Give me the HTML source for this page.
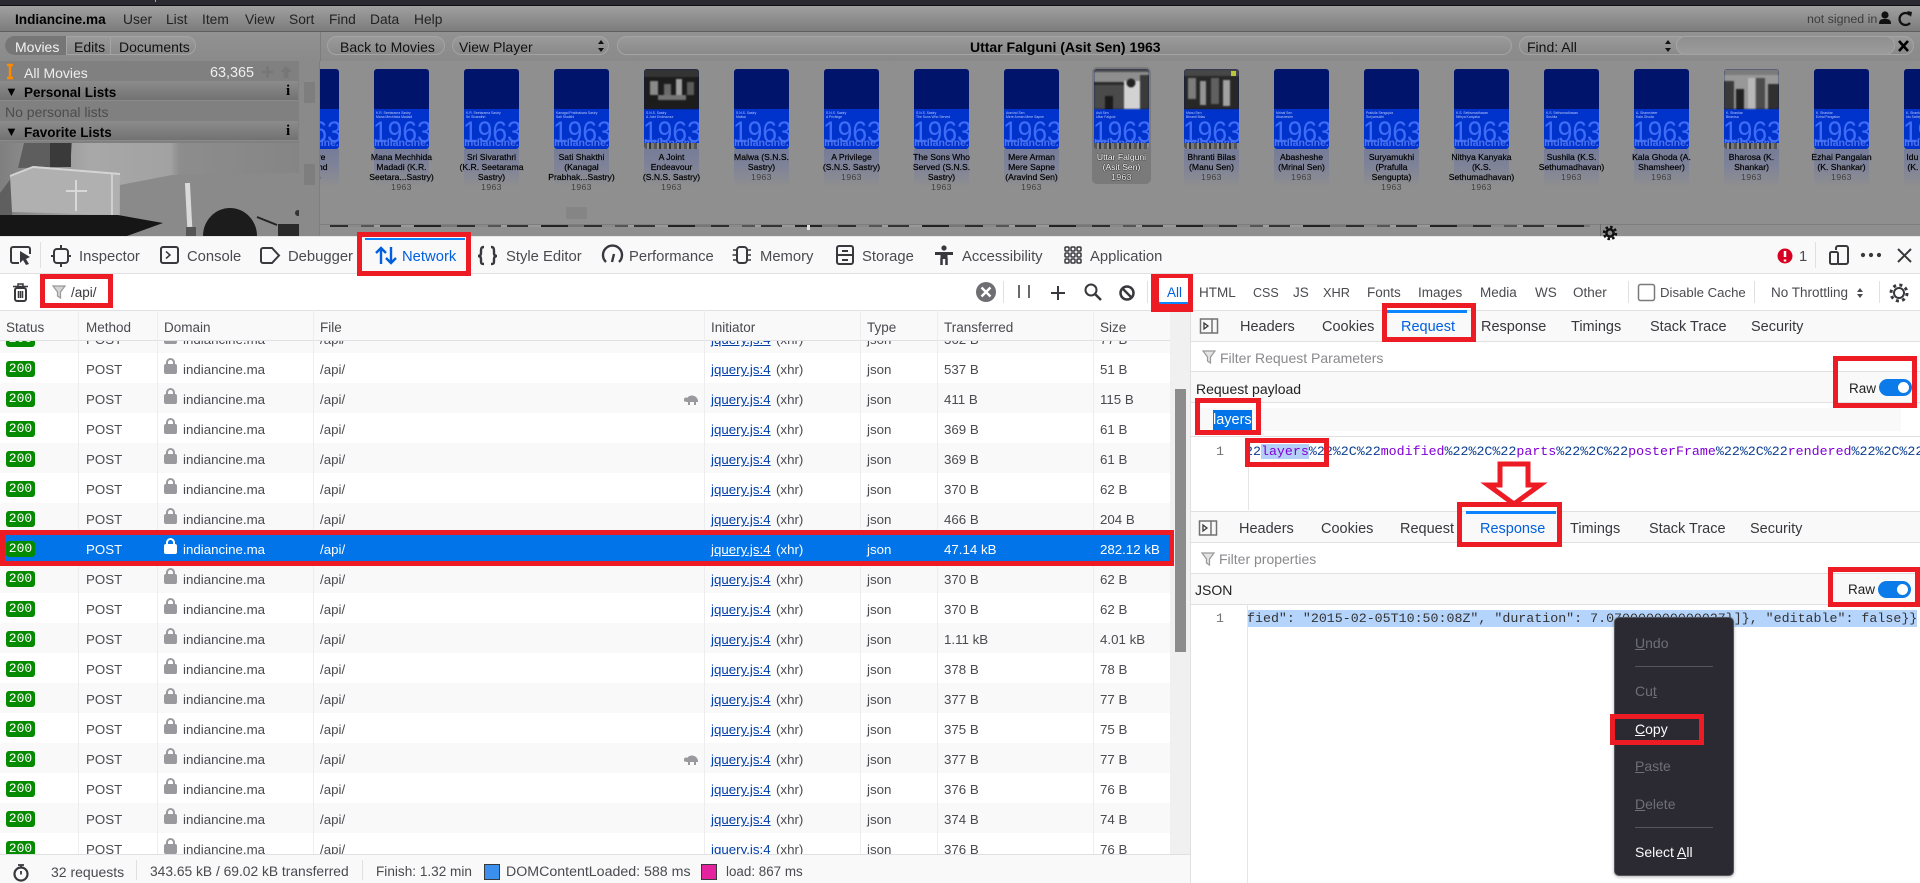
<!DOCTYPE html>
<html lang="en"><head><meta charset="utf-8"><title>Indiancine.ma</title>
<style>
html,body{margin:0;padding:0;background:#fff}
body{width:1920px;height:883px;overflow:hidden;position:relative;font-family:"Liberation Sans",sans-serif}
.t{position:absolute;white-space:nowrap;line-height:20px;font-size:14px;color:#111}
.b{position:absolute;box-sizing:border-box}
.pill{position:absolute;box-sizing:border-box;height:19px;top:36px;border-radius:10px;background:linear-gradient(#9b9b9b,#8a8a8a);border:1px solid #a4a4a4}
.tb{font-size:14.8px;color:#4a4a4f}
.f2{font-size:13.5px;color:#4a4a4f}
.pt{font-size:14.5px;color:#38383d}
.ph{font-size:14px;color:#8a8a8e}
.blue{color:#0060df}
.x{position:absolute;border:5px solid #ed1c24;box-sizing:border-box}
.sec{position:absolute;left:0;width:298px;height:20px;background:linear-gradient(#8c8c8c,#727272);border-bottom:1px solid #8a8a8a;box-sizing:border-box}
#strip{position:absolute;left:320px;top:61px;width:1600px;height:164px;overflow:hidden}
.c{position:absolute;top:8px;width:55px;height:118px}
.p{position:absolute;left:0;top:0;width:55px;height:80px;border-radius:3px;overflow:hidden;background:linear-gradient(#00146b 0,#00146b 40px,#0033cc 40px,#0033cc 100%)}
.p b{position:absolute;left:-1px;top:49px;font-weight:normal;font-size:30px;line-height:30px;color:#3f6cf6;white-space:nowrap;transform:scaleX(.88);transform-origin:0 0}
.p u{position:absolute;left:0;top:68px;text-decoration:none;font-size:10.5px;line-height:12px;font-weight:bold;color:#4c72ee;white-space:nowrap}
.p s{position:absolute;left:2px;text-decoration:none;font-size:3.4px;line-height:4px;color:#b8c8f8;white-space:nowrap}
.p svg{position:absolute;left:0;top:0;filter:blur(.7px)}
.q{position:absolute;left:0;top:74px;width:55px;height:6px;background:repeating-linear-gradient(90deg,#555 0 3px,#8a8a8a 3px 5px,#333 5px 7px,#777 7px 10px)}
.rf{position:absolute;left:0;top:80px;width:55px;height:38px;background:linear-gradient(#767c98,#7f8398 45%,#8f8f8f)}
.n{position:absolute;left:-18px;width:91px;top:83px;text-align:center;font-size:8.6px;line-height:10px;color:#000;white-space:nowrap;-webkit-text-stroke:.2px #000}
.n i{font-style:normal;color:#3f3f3f;-webkit-text-stroke:0;letter-spacing:.4px}
.sel .rf{display:none}
.sel .bg{position:absolute;left:-2px;top:-2px;width:59px;height:117px;border-radius:5px;background:#7a7a7a}
.sel .n{color:#fff;-webkit-text-stroke:0;text-shadow:0 0 1px #000,0 0 1px #000}
.sel .n i{color:#eee}
#list{position:absolute;left:0;top:341px;width:1170px;height:513px;overflow:hidden;background:#fff}
.r{position:absolute;left:0;width:1170px;height:30px;line-height:33px;font-size:13.3px;color:#4a4a4f;background:#fff}
.g{background:#f9f9fa}
.r span,.r b,.r u,.r em{position:absolute;white-space:nowrap;font-style:normal;font-weight:normal}
.r b{left:6px;top:8px;width:29px;height:16px;border-radius:3px;background:#058b00;color:#fff;font:13px/16px "Liberation Mono",monospace;text-align:center}
.m{left:86px}.d{left:183px}.f{left:320px}.xh{left:776px}.y{left:867px}.a{left:944px}.z{left:1100px}
.r u{left:711px;color:#003eaa}
.r em{left:164px;top:11px;width:13px;height:10px;background:#9a9a9e;border-radius:2px}
.r em:before{content:"";position:absolute;left:2px;top:-6px;width:5px;height:6px;border:2px solid #9a9a9e;border-bottom:0;border-radius:5px 5px 0 0}
.s{background:#0074e8;color:#fff}
.s u{color:#fff}.s em{background:#fff}.s em:before{border-color:#fff}
.vl{position:absolute;top:310px;width:1px;height:544px;background:#ededf0}
.ln{position:absolute;left:1190px;width:730px;height:1px;background:#e0e0e2}
.mono{font-family:"Liberation Mono",monospace;font-size:13.3px}
.code{position:absolute;left:1247px;width:673px;overflow:hidden;white-space:pre;height:20px;line-height:20px}
.tg{position:absolute;width:33px;height:17px;border-radius:9px;background:#0a7be8}
.tg:after{content:"";position:absolute;right:3px;top:3px;width:11px;height:11px;border-radius:50%;background:#fff}
#menu{position:absolute;left:1614px;top:617px;width:120px;height:259px;background:#2b2a33;border:1px solid #55555c;border-radius:5px;box-sizing:border-box;box-shadow:0 1px 3px rgba(0,0,0,.3)}
.mi{position:absolute;left:1635px;font-size:14px;line-height:20px;color:#6f6f78;white-space:nowrap}
.mw{color:#fbfbfe}
.ms{position:absolute;left:1635px;width:78px;height:1px;background:#55555c}
</style></head><body>

<!-- top app -->
<div class="b" style="left:0;top:0;width:1920px;height:6px;background:#2b2a33;border-bottom:1px solid #111"></div>
<div class="b" style="left:155px;top:0;width:1px;height:2px;background:#aaa"></div>
<div class="b" style="left:0;top:6px;width:1920px;height:26px;background:linear-gradient(#a0a0a0,#7c7c7c);border-bottom:1px solid #5f5f5f"></div>
<div class="b" style="left:0;top:32px;width:1920px;height:29px;background:linear-gradient(#929292,#8a8a8a)"></div>
<div class="b" style="left:0;top:61px;width:1920px;height:175px;background:#8f8f8f"></div>
<div class="t" style="left:15px;top:10px;font-weight:bold;font-size:13.6px;color:#000">Indiancine.ma</div>
<div class="t" style="left:123px;top:10px;color:#222;font-size:13.8px">User</div>
<div class="t" style="left:166px;top:10px;color:#222;font-size:13.8px">List</div>
<div class="t" style="left:202px;top:10px;color:#222;font-size:13.8px">Item</div>
<div class="t" style="left:245px;top:10px;color:#222;font-size:13.8px">View</div>
<div class="t" style="left:289px;top:10px;color:#222;font-size:13.8px">Sort</div>
<div class="t" style="left:329px;top:10px;color:#222;font-size:13.8px">Find</div>
<div class="t" style="left:370px;top:10px;color:#222;font-size:13.8px">Data</div>
<div class="t" style="left:414px;top:10px;color:#222;font-size:13.8px">Help</div>
<div class="t" style="left:1807px;top:9px;color:#3c3c3c;font-size:12.4px">not signed in</div>

<!-- segmented tabs -->
<div class="pill" style="left:5px;width:191px"></div>
<div class="b" style="left:5px;top:36px;width:61px;height:19px;background:#767676;border-radius:10px 0 0 10px"></div>
<div class="b" style="left:110px;top:36px;width:1px;height:19px;background:#a4a4a4"></div>
<div class="b" style="left:66px;top:36px;width:1px;height:19px;background:#a4a4a4"></div>
<div class="t" style="left:15px;top:37px;color:#f2f2f2">Movies</div>
<div class="t" style="left:74px;top:37px;color:#111">Edits</div>
<div class="t" style="left:119px;top:37px;color:#111">Documents</div>
<div class="b" style="left:320px;top:32px;width:1px;height:29px;background:#7d7d7d"></div>
<div class="pill" style="left:327px;width:118px"></div>
<div class="t" style="left:340px;top:37px">Back to Movies</div>
<div class="pill" style="left:452px;width:157px"></div>
<div class="t" style="left:459px;top:37px">View Player</div>
<div class="pill" style="left:617px;width:895px"></div>
<div class="t" style="left:970px;top:37px;font-weight:bold;color:#000">Uttar Falguni (Asit Sen) 1963</div>
<div class="pill" style="left:1519px;width:170px"></div>
<div class="t" style="left:1527px;top:37px">Find: All</div>
<div class="pill" style="left:1676px;width:238px"></div>
<div class="pill" style="left:1676px;width:219px;background:linear-gradient(#8f8f8f,#9b9b9b)"></div>

<!-- left list -->
<div class="b" style="left:0;top:61px;width:299px;height:82px;background:#808080"></div>
<div class="b" style="left:299px;top:61px;width:21px;height:175px;background:#8a8a8a;border-right:1px solid #7f7f7f"></div>
<div class="b" style="left:304px;top:82px;width:11px;height:21px;background:#7e7e7e"></div>
<div class="b" style="left:304px;top:164px;width:11px;height:21px;background:#7e7e7e"></div>
<div class="t" style="left:24px;top:63px;color:#eee">All Movies</div>
<div class="t" style="left:210px;top:63px;color:#eee;font-size:14.4px">63,365</div>
<div class="sec" style="top:81px"></div>
<div class="t" style="left:5px;top:82px;font-size:13px;color:#000">▼</div>
<div class="t" style="left:24px;top:83px;font-weight:bold;font-size:13.5px;color:#000">Personal Lists</div>
<div class="t" style="left:286px;top:81px;font:bold 15px/20px 'Liberation Serif',serif;color:#000">i</div>
<div class="t" style="left:5px;top:102px;color:#4c4c4c">No personal lists</div>
<div class="sec" style="top:121px"></div>
<div class="t" style="left:5px;top:122px;font-size:13px;color:#000">▼</div>
<div class="t" style="left:24px;top:123px;font-weight:bold;font-size:13.5px;color:#000">Favorite Lists</div>
<div class="t" style="left:286px;top:121px;font:bold 15px/20px 'Liberation Serif',serif;color:#000">i</div>

<!-- sidebar photo -->
<svg class="b" style="left:0;top:143px" width="299" height="93" viewBox="0 0 299 93">
<defs><linearGradient id="w" x1="0" x2="1" y1="0" y2="0"><stop offset="0" stop-color="#7f7f7f"/><stop offset=".3" stop-color="#a8a8a8"/><stop offset=".57" stop-color="#a2a2a2"/><stop offset=".6" stop-color="#8d8d8d"/><stop offset="1" stop-color="#858585"/></linearGradient></defs>
<rect width="299" height="93" fill="url(#w)"/>
<polygon points="120,42 172,32 299,30 299,93 120,93" fill="#8a8a8a"/>
<polygon points="0,50 12,34 12,72 0,75" fill="#5f5f5f"/>
<polygon points="18,25 24,0 72,0 70,24" fill="#5e5e5e"/>
<rect x="50" y="0" width="21" height="24" fill="#3a3a3a"/>
<polygon points="10,32 33,23 120,30 119,72 12,69" fill="#b0b0b0"/>
<polygon points="10,32 33,23 120,30 120,32 33,25 10,34" fill="#d4d4d4"/>
<path d="M76 37v31M66 48h21" stroke="#d8d8d8" stroke-width="2"/>
<path d="M112 31v41" stroke="#cfcfcf" stroke-width="2"/>
<polygon points="0,72 118,72 163,80 127,93 0,93" fill="#161616"/>
<rect x="186" y="40" width="5" height="44" fill="#dadada" transform="rotate(-3 188 60)"/>
<rect x="186" y="84" width="10" height="9" fill="#555"/>
<ellipse cx="230" cy="93" rx="27" ry="28" fill="#1c1c1c"/>
<path d="M257 74l20 8" stroke="#222" stroke-width="2" fill="none"/>
<rect x="278" y="81" width="21" height="12" fill="#2a2a2a"/>
<circle cx="298" cy="70" r="3" fill="#333"/>
</svg>

<!-- strip of movies -->
<div id="strip"><div style="position:absolute;left:-320px;top:0;width:1920px;height:164px">
<div class="c" style="left:284px"><div class="rf"></div><div class="p"><s style="top:42px">Aravind Sen</s><s style="top:46px">Adhure</s><b>1963</b><u>Indiancine.ma</u></div><div class="n">Adhure<br>(Aravind<br>Sen)</div></div>
<div class="c" style="left:374px"><div class="rf"></div><div class="p"><s style="top:42px">K.R. Seetarama Sastry</s><s style="top:46px">Mana Mechhida Madadi</s><b>1963</b><u>Indiancine.ma</u></div><div class="n">Mana Mechhida<br>Madadi (K.R.<br>Seetara...Sastry)<br><i>1963</i></div></div>
<div class="c" style="left:464px"><div class="rf"></div><div class="p"><s style="top:42px">K.R. Seetarama Sastry</s><s style="top:46px">Sri Sivarathri</s><b>1963</b><u>Indiancine.ma</u></div><div class="n">Sri Sivarathri<br>(K.R. Seetarama<br>Sastry)<br><i>1963</i></div></div>
<div class="c" style="left:554px"><div class="rf"></div><div class="p"><s style="top:42px">Kanagal Prabhakara Sastry</s><s style="top:46px">Sati Shakthi</s><b>1963</b><u>Indiancine.ma</u></div><div class="n">Sati Shakthi<br>(Kanagal<br>Prabhak...Sastry)<br><i>1963</i></div></div>
<div class="c" style="left:644px"><div class="rf"></div><div class="p"><svg width="55" height="40"><rect width="55" height="40" fill="#1c1c1c"/><rect y="0" width="55" height="8" fill="#343434"/><rect x="6" y="12" width="8" height="14" fill="#8a8a8a"/><rect x="20" y="15" width="7" height="11" fill="#6a6a6a"/><rect x="32" y="10" width="6" height="16" fill="#a0a0a0"/><rect x="43" y="13" width="7" height="13" fill="#5c5c5c"/><rect x="14" y="26" width="28" height="5" fill="#747474"/></svg><s style="top:42px">S.N.S. Sastry</s><s style="top:46px">A Joint Endeavour</s><b>1963</b><u>Indiancine.ma</u><div class="q"></div></div><div class="n">A Joint<br>Endeavour<br>(S.N.S. Sastry)<br><i>1963</i></div></div>
<div class="c" style="left:734px"><div class="rf"></div><div class="p"><s style="top:42px">S.N.S. Sastry</s><s style="top:46px">Malwa</s><b>1963</b><u>Indiancine.ma</u></div><div class="n">Malwa (S.N.S.<br>Sastry)<br><i>1963</i></div></div>
<div class="c" style="left:824px"><div class="rf"></div><div class="p"><s style="top:42px">S.N.S. Sastry</s><s style="top:46px">A Privilege</s><b>1963</b><u>Indiancine.ma</u></div><div class="n">A Privilege<br>(S.N.S. Sastry)<br><i>1963</i></div></div>
<div class="c" style="left:914px"><div class="rf"></div><div class="p"><s style="top:42px">S.N.S. Sastry</s><s style="top:46px">The Sons Who Served</s><b>1963</b><u>Indiancine.ma</u></div><div class="n">The Sons Who<br>Served (S.N.S.<br>Sastry)<br><i>1963</i></div></div>
<div class="c" style="left:1004px"><div class="rf"></div><div class="p"><s style="top:42px">Aravind Sen</s><s style="top:46px">Mere Arman Mere Sapne</s><b>1963</b><u>Indiancine.ma</u></div><div class="n">Mere Arman<br>Mere Sapne<br>(Aravind Sen)<br><i>1963</i></div></div>
<div class="c sel" style="left:1094px"><div class="bg"></div><div class="p"><svg width="55" height="40"><rect width="55" height="40" fill="#8e8e8e"/><rect y="0" width="55" height="3" fill="#4a4a4a"/><rect x="0" y="13" width="32" height="3" fill="#2a2a2a"/><rect x="0" y="16" width="30" height="24" fill="#4a4a4a"/><rect x="11" y="27" width="8" height="13" fill="#1a1a1a"/><rect x="30" y="12" width="16" height="28" fill="#d2d2d2"/><circle cx="37" cy="14" r="4.500" fill="#222"/><rect x="46" y="6" width="9" height="34" fill="#3a3a3a"/></svg><s style="top:42px">Asit Sen</s><s style="top:46px">Uttar Falguni</s><b>1963</b><u>Indiancine.ma</u><div class="q"></div></div><div class="n">Uttar Falguni<br>(Asit Sen)<br><i>1963</i></div></div>
<div class="c" style="left:1184px"><div class="rf"></div><div class="p"><svg width="55" height="40"><rect width="55" height="40" fill="#272727"/><rect x="0" y="0" width="55" height="7" fill="#474747"/><rect x="4" y="9" width="8" height="21" fill="#7c7c7c"/><rect x="16" y="12" width="6" height="24" fill="#949494"/><rect x="27" y="9" width="8" height="26" fill="#606060"/><rect x="39" y="11" width="7" height="26" fill="#a2a2a2"/></svg><svg width="55" height="40" style="filter:none"><rect x="47" y="2" width="5" height="5" fill="#b7c63a"/></svg><s style="top:42px">Manu Sen</s><s style="top:46px">Bhranti Bilas</s><b>1963</b><u>Indiancine.ma</u><div class="q"></div></div><div class="n">Bhranti Bilas<br>(Manu Sen)<br><i>1963</i></div></div>
<div class="c" style="left:1274px"><div class="rf"></div><div class="p"><s style="top:42px">Mrinal Sen</s><s style="top:46px">Abasheshe</s><b>1963</b><u>Indiancine.ma</u></div><div class="n">Abasheshe<br>(Mrinal Sen)<br><i>1963</i></div></div>
<div class="c" style="left:1364px"><div class="rf"></div><div class="p"><s style="top:42px">Prafulla Sengupta</s><s style="top:46px">Suryamukhi</s><b>1963</b><u>Indiancine.ma</u></div><div class="n">Suryamukhi<br>(Prafulla<br>Sengupta)<br><i>1963</i></div></div>
<div class="c" style="left:1454px"><div class="rf"></div><div class="p"><s style="top:42px">K.S. Sethumadhavan</s><s style="top:46px">Nithya Kanyaka</s><b>1963</b><u>Indiancine.ma</u></div><div class="n">Nithya Kanyaka<br>(K.S.<br>Sethumadhavan)<br><i>1963</i></div></div>
<div class="c" style="left:1544px"><div class="rf"></div><div class="p"><s style="top:42px">K.S. Sethumadhavan</s><s style="top:46px">Sushila</s><b>1963</b><u>Indiancine.ma</u></div><div class="n">Sushila (K.S.<br>Sethumadhavan)<br><i>1963</i></div></div>
<div class="c" style="left:1634px"><div class="rf"></div><div class="p"><s style="top:42px">A. Shamsheer</s><s style="top:46px">Kala Ghoda</s><b>1963</b><u>Indiancine.ma</u></div><div class="n">Kala Ghoda (A.<br>Shamsheer)<br><i>1963</i></div></div>
<div class="c" style="left:1724px"><div class="rf"></div><div class="p"><svg width="55" height="40"><rect width="55" height="40" fill="#989898"/><rect x="0" y="0" width="55" height="6" fill="#7c7c7c"/><rect x="0" y="12" width="10" height="28" fill="#3a3a3a"/><rect x="12" y="20" width="8" height="20" fill="#222"/><rect x="24" y="9" width="7" height="31" fill="#b8b8b8"/><rect x="32" y="9" width="9" height="31" fill="#4c4c4c"/><rect x="44" y="15" width="11" height="25" fill="#303030"/></svg><s style="top:42px">K. Shankar</s><s style="top:46px">Bharosa</s><b>1963</b><u>Indiancine.ma</u><div class="q"></div></div><div class="n">Bharosa (K.<br>Shankar)<br><i>1963</i></div></div>
<div class="c" style="left:1814px"><div class="rf"></div><div class="p"><s style="top:42px">K. Shankar</s><s style="top:46px">Ezhai Pangalan</s><b>1963</b><u>Indiancine.ma</u></div><div class="n">Ezhai Pangalan<br>(K. Shankar)<br><i>1963</i></div></div>
<div class="c" style="left:1904px"><div class="rf"></div><div class="p"><s style="top:42px">K. Shankar</s><s style="top:46px">Idu Sathiyam</s><b>1963</b><u>Indiancine.ma</u></div><div class="n">Idu Sathiyam<br>(K. Shankar)<br><i>1963</i></div></div>
</div></div>
<div class="b" style="left:566px;top:207px;width:21px;height:12px;background:#858585"></div>
<div class="b" style="left:320px;top:224px;width:1600px;height:1px;background:#7d7d7d"></div>
<div class="b" style="left:330px;top:225px;width:1260px;height:2px;background:repeating-linear-gradient(90deg,#2d2d2d 0 18px,#8a8a8a 18px 31px,#555 31px 44px,#9c9c9c 44px 50px,#333 50px 71px,#999 71px 84px,#222 84px 111px,#777 111px 127px)"></div>
<div class="b" style="left:807px;top:225px;width:3px;height:5px;background:#ddd"></div>
<div class="b" style="left:1600px;top:224px;width:1px;height:12px;background:#6f6f6f"></div>

<!-- devtools toolbar -->
<div class="b" style="left:0;top:236px;width:1920px;height:38px;background:#f9f9fa;border-bottom:1px solid #e0e0e2;border-top:1px solid #e6e6e6"></div>
<div class="b" style="left:0;top:274px;width:1920px;height:36px;background:#fff"></div>
<div class="b" style="left:365px;top:238px;width:100px;height:2px;background:#0a84ff"></div>
<div class="t tb" style="left:79px;top:247px">Inspector</div>
<div class="t tb" style="left:187px;top:247px">Console</div>
<div class="t tb" style="left:288px;top:247px">Debugger</div>
<div class="t tb blue" style="left:402px;top:247px">Network</div>
<div class="t tb" style="left:506px;top:247px">Style Editor</div>
<div class="t tb" style="left:629px;top:247px">Performance</div>
<div class="t tb" style="left:760px;top:247px">Memory</div>
<div class="t tb" style="left:862px;top:247px">Storage</div>
<div class="t tb" style="left:962px;top:247px">Accessibility</div>
<div class="t tb" style="left:1090px;top:247px">Application</div>
<div class="t tb" style="left:1799px;top:247px">1</div>
<div class="t" style="left:71px;top:283px;font-size:13.5px;color:#38383d">/api/</div>
<div class="t f2 blue" style="left:1167px;top:283px">All</div>
<div class="b" style="left:1159px;top:302px;width:29px;height:2px;background:#0a84ff"></div>
<div class="t f2" style="left:1199px;top:283px">HTML</div>
<div class="t f2" style="left:1253px;top:283px;font-size:12.5px">CSS</div>
<div class="t f2" style="left:1293px;top:283px">JS</div>
<div class="t f2" style="left:1323px;top:283px;font-size:12.8px">XHR</div>
<div class="t f2" style="left:1367px;top:283px">Fonts</div>
<div class="t f2" style="left:1418px;top:283px">Images</div>
<div class="t f2" style="left:1480px;top:283px">Media</div>
<div class="t f2" style="left:1535px;top:283px">WS</div>
<div class="t f2" style="left:1573px;top:283px">Other</div>
<div class="t f2" style="left:1660px;top:283px;font-size:13.2px">Disable Cache</div>
<div class="t f2" style="left:1771px;top:283px">No Throttling</div>

<!-- table header -->
<div class="b" style="left:0;top:310px;width:1190px;height:31px;background:#f9f9fa;border-top:1px solid #e0e0e2;border-bottom:1px solid #e0e0e2"></div>
<div class="t f2" style="left:6px;top:318px">Status</div>
<div class="t f2" style="left:86px;top:318px">Method</div>
<div class="t f2" style="left:164px;top:318px">Domain</div>
<div class="t f2" style="left:320px;top:318px">File</div>
<div class="t f2" style="left:711px;top:318px">Initiator</div>
<div class="t f2" style="left:867px;top:318px">Type</div>
<div class="t f2" style="left:944px;top:318px">Transferred</div>
<div class="t f2" style="left:1100px;top:318px">Size</div>

<!-- rows -->
<div id="list">
<div class="r g" style="top:-18px"><b>200</b><span class="m">POST</span><em></em><span class="d">indiancine.ma</span><span class="f">/api/</span><u>jquery.js:4</u><span class="xh">(xhr)</span><span class="y">json</span><span class="a">362 B</span><span class="z">77 B</span></div>
<div class="r" style="top:12px"><b>200</b><span class="m">POST</span><em></em><span class="d">indiancine.ma</span><span class="f">/api/</span><u>jquery.js:4</u><span class="xh">(xhr)</span><span class="y">json</span><span class="a">537 B</span><span class="z">51 B</span></div>
<div class="r g" style="top:42px"><b>200</b><span class="m">POST</span><em></em><span class="d">indiancine.ma</span><span class="f">/api/</span><u>jquery.js:4</u><span class="xh">(xhr)</span><span class="y">json</span><span class="a">411 B</span><span class="z">115 B</span></div>
<div class="r" style="top:72px"><b>200</b><span class="m">POST</span><em></em><span class="d">indiancine.ma</span><span class="f">/api/</span><u>jquery.js:4</u><span class="xh">(xhr)</span><span class="y">json</span><span class="a">369 B</span><span class="z">61 B</span></div>
<div class="r g" style="top:102px"><b>200</b><span class="m">POST</span><em></em><span class="d">indiancine.ma</span><span class="f">/api/</span><u>jquery.js:4</u><span class="xh">(xhr)</span><span class="y">json</span><span class="a">369 B</span><span class="z">61 B</span></div>
<div class="r" style="top:132px"><b>200</b><span class="m">POST</span><em></em><span class="d">indiancine.ma</span><span class="f">/api/</span><u>jquery.js:4</u><span class="xh">(xhr)</span><span class="y">json</span><span class="a">370 B</span><span class="z">62 B</span></div>
<div class="r g" style="top:162px"><b>200</b><span class="m">POST</span><em></em><span class="d">indiancine.ma</span><span class="f">/api/</span><u>jquery.js:4</u><span class="xh">(xhr)</span><span class="y">json</span><span class="a">466 B</span><span class="z">204 B</span></div>
<div class="r" style="top:192px"><b>200</b><span class="m">POST</span><em></em><span class="d">indiancine.ma</span><span class="f">/api/</span><u>jquery.js:4</u><span class="xh">(xhr)</span><span class="y">json</span><span class="a">47.14 kB</span><span class="z">282.12 kB</span></div>
<div class="r g" style="top:222px"><b>200</b><span class="m">POST</span><em></em><span class="d">indiancine.ma</span><span class="f">/api/</span><u>jquery.js:4</u><span class="xh">(xhr)</span><span class="y">json</span><span class="a">370 B</span><span class="z">62 B</span></div>
<div class="r" style="top:252px"><b>200</b><span class="m">POST</span><em></em><span class="d">indiancine.ma</span><span class="f">/api/</span><u>jquery.js:4</u><span class="xh">(xhr)</span><span class="y">json</span><span class="a">370 B</span><span class="z">62 B</span></div>
<div class="r g" style="top:282px"><b>200</b><span class="m">POST</span><em></em><span class="d">indiancine.ma</span><span class="f">/api/</span><u>jquery.js:4</u><span class="xh">(xhr)</span><span class="y">json</span><span class="a">1.11 kB</span><span class="z">4.01 kB</span></div>
<div class="r" style="top:312px"><b>200</b><span class="m">POST</span><em></em><span class="d">indiancine.ma</span><span class="f">/api/</span><u>jquery.js:4</u><span class="xh">(xhr)</span><span class="y">json</span><span class="a">378 B</span><span class="z">78 B</span></div>
<div class="r g" style="top:342px"><b>200</b><span class="m">POST</span><em></em><span class="d">indiancine.ma</span><span class="f">/api/</span><u>jquery.js:4</u><span class="xh">(xhr)</span><span class="y">json</span><span class="a">377 B</span><span class="z">77 B</span></div>
<div class="r" style="top:372px"><b>200</b><span class="m">POST</span><em></em><span class="d">indiancine.ma</span><span class="f">/api/</span><u>jquery.js:4</u><span class="xh">(xhr)</span><span class="y">json</span><span class="a">375 B</span><span class="z">75 B</span></div>
<div class="r g" style="top:402px"><b>200</b><span class="m">POST</span><em></em><span class="d">indiancine.ma</span><span class="f">/api/</span><u>jquery.js:4</u><span class="xh">(xhr)</span><span class="y">json</span><span class="a">377 B</span><span class="z">77 B</span></div>
<div class="r" style="top:432px"><b>200</b><span class="m">POST</span><em></em><span class="d">indiancine.ma</span><span class="f">/api/</span><u>jquery.js:4</u><span class="xh">(xhr)</span><span class="y">json</span><span class="a">376 B</span><span class="z">76 B</span></div>
<div class="r g" style="top:462px"><b>200</b><span class="m">POST</span><em></em><span class="d">indiancine.ma</span><span class="f">/api/</span><u>jquery.js:4</u><span class="xh">(xhr)</span><span class="y">json</span><span class="a">374 B</span><span class="z">74 B</span></div>
<div class="r" style="top:492px"><b>200</b><span class="m">POST</span><em></em><span class="d">indiancine.ma</span><span class="f">/api/</span><u>jquery.js:4</u><span class="xh">(xhr)</span><span class="y">json</span><span class="a">376 B</span><span class="z">76 B</span></div>
</div>
<div class="vl" style="left:78px"></div><div class="vl" style="left:157px"></div><div class="vl" style="left:313px"></div><div class="vl" style="left:704px"></div><div class="vl" style="left:860px"></div><div class="vl" style="left:937px"></div><div class="vl" style="left:1093px"></div>
<div class="r s" style="top:533px"><b>200</b><span class="m">POST</span><em></em><span class="d">indiancine.ma</span><span class="f">/api/</span><u>jquery.js:4</u><span class="xh">(xhr)</span><span class="y">json</span><span class="a">47.14 kB</span><span class="z">282.12 kB</span></div>

<!-- scrollbar + footer -->
<div class="b" style="left:1170px;top:310px;width:20px;height:544px;background:#f0f0f0"></div>
<div class="b" style="left:1175px;top:389px;width:11px;height:263px;background:#8c8c8c"></div>
<div class="b" style="left:0;top:854px;width:1190px;height:29px;background:#f9f9fa;border-top:1px solid #e0e0e2"></div>
<div class="t" style="left:51px;top:862px;color:#4a4a4f">32 requests</div>
<div class="t" style="left:150px;top:862px;color:#4a4a4f;font-size:13.8px">343.65 kB / 69.02 kB transferred</div>
<div class="t" style="left:376px;top:862px;color:#4a4a4f;font-size:13.6px">Finish: 1.32 min</div>
<div class="t" style="left:506px;top:862px;color:#4a4a4f;font-size:14.2px">DOMContentLoaded: 588 ms</div>
<div class="t" style="left:726px;top:862px;color:#4a4a4f;font-size:13.4px">load: 867 ms</div>
<div class="b" style="left:484px;top:864px;width:16px;height:16px;background:#3b90ed;border:1px solid #38383d"></div>
<div class="b" style="left:701px;top:864px;width:16px;height:16px;background:#e5239f;border:1px solid #38383d"></div>

<!-- right panel -->
<div class="b" style="left:1190px;top:310px;width:730px;height:573px;background:#fff;border-left:1px solid #e0e0e2"></div>
<div class="b" style="left:1191px;top:311px;width:729px;height:30px;background:#f9f9fa"></div>
<div class="b" style="left:1191px;top:372px;width:729px;height:30px;background:#f9f9fa"></div>
<div class="b" style="left:1200px;top:408px;width:701px;height:23px;background:#f9f9fa"></div>
<div class="b" style="left:1191px;top:512px;width:729px;height:30px;background:#f9f9fa"></div>
<div class="b" style="left:1191px;top:574px;width:729px;height:30px;background:#f9f9fa"></div>
<div class="ln" style="top:310px"></div><div class="ln" style="top:341px"></div><div class="ln" style="top:371px"></div><div class="ln" style="top:402px"></div><div class="ln" style="top:436px"></div>
<div class="ln" style="top:511px"></div><div class="ln" style="top:542px"></div><div class="ln" style="top:573px"></div><div class="ln" style="top:604px"></div>

<div class="t pt" style="left:1240px;top:317px">Headers</div>
<div class="t pt" style="left:1322px;top:317px">Cookies</div>
<div class="t pt blue" style="left:1401px;top:317px">Request</div>
<div class="t pt" style="left:1481px;top:317px">Response</div>
<div class="t pt" style="left:1571px;top:317px">Timings</div>
<div class="t pt" style="left:1650px;top:317px">Stack Trace</div>
<div class="t pt" style="left:1751px;top:317px">Security</div>
<div class="b" style="left:1387px;top:310px;width:80px;height:3px;background:#0a84ff"></div>
<div class="t ph" style="left:1220px;top:348px">Filter Request Parameters</div>
<div class="t" style="left:1196px;top:379px;color:#222;font-size:14px">Request payload</div>
<div class="t" style="left:1849px;top:379px;color:#222;font-size:13.5px">Raw</div>
<div class="tg" style="left:1879px;top:379px"></div>
<div class="t" style="left:1213px;top:410px;background:#0074e8;color:#fff;font-size:14.5px;padding-right:0">layers</div>
<div class="t mono" style="left:1216px;top:442px;color:#737373">1</div>
<div class="code mono" style="top:442px;color:#0b3d91"><span style="margin-left:-2px">22</span><span style="background:#b5d0f8;color:#8000d7">layers</span>%22%2C%22<span style="color:#8000d7">modified</span>%22%2C%22<span style="color:#8000d7">parts</span>%22%2C%22<span style="color:#8000d7">posterFrame</span>%22%2C%22<span style="color:#8000d7">rendered</span>%22%2C%22<span style="color:#8000d7">summary</span></div>
<div class="b" style="left:1248px;top:462px;width:1px;height:48px;background:#e5e5e5"></div>

<div class="t pt" style="left:1239px;top:519px">Headers</div>
<div class="t pt" style="left:1321px;top:519px">Cookies</div>
<div class="t pt" style="left:1400px;top:519px">Request</div>
<div class="t pt blue" style="left:1480px;top:519px">Response</div>
<div class="t pt" style="left:1570px;top:519px">Timings</div>
<div class="t pt" style="left:1649px;top:519px">Stack Trace</div>
<div class="t pt" style="left:1750px;top:519px">Security</div>
<div class="b" style="left:1466px;top:511px;width:90px;height:3px;background:#0a84ff"></div>
<div class="t ph" style="left:1219px;top:549px">Filter properties</div>
<div class="t" style="left:1195px;top:580px;color:#222">JSON</div>
<div class="t" style="left:1848px;top:580px;color:#222;font-size:13.5px">Raw</div>
<div class="tg" style="left:1878px;top:581px"></div>
<div class="b" style="left:1247px;top:604px;width:1px;height:279px;background:#e5e5e5"></div>
<div class="t mono" style="left:1216px;top:609px;color:#737373">1</div>
<div class="b" style="left:1248px;top:610px;width:669px;height:17px;background:#b5d4fb"></div>
<div class="code mono" style="top:609px;color:#333;width:673px">fied": "2015-02-05T10:50:08Z", "duration": 7.070000000000027}]}, "editable": false}}</div>

<!-- icon overlay -->
<svg class="b" style="left:0;top:0" width="1920" height="883" viewBox="0 0 1920 883" fill="none" stroke="#38383d" stroke-width="2">
<!-- app icons -->
<path d="M601 40l-3 4h6zM601 52l-3-4h6z" fill="#111" stroke="none"/>
<path d="M1668 40l-3 4h6zM1668 52l-3-4h6z" fill="#111" stroke="none"/>
<path d="M1899 41l9 10M1908 41l-9 10" stroke="#000" stroke-width="2.6"/>
<path d="M7 65h6M10 65v13M7 78h6" stroke="#ff8a00" stroke-width="2.4"/>
<path d="M262 72h11M267.500 66.500v11" stroke="#777" stroke-width="3"/>
<path d="M286 66l6 6h-3.500v6h-5v-6H280z" fill="#777" stroke="none"/>
<circle cx="1885" cy="15" r="3.600" fill="#111" stroke="none"/><path d="M1879 24c0-5 3-5 6-5s6 0 6 5z" fill="#111" stroke="none"/>
<path d="M1910 15a6 6 0 1 0 0 8" stroke="#111" stroke-width="2.200"/><path d="M1907 11l5 1-1 5z" fill="#111" stroke="none"/>
<circle cx="1610" cy="233" r="3.600" stroke="#111" stroke-width="2.500"/><circle cx="1610" cy="233" r="6" stroke="#111" stroke-width="2.500" stroke-dasharray="2.500 2.200"/>
<!-- toolbar -->
<path d="M19 263h-6a2 2 0 0 1-2-2v-12a2 2 0 0 1 2-2h15a2 2 0 0 1 2 2v5"/>
<polygon points="20,251 30,257 26,259 29,264 26,265 23,260 20,263" fill="#38383d" stroke="none"/>
<path d="M40.500 242v26" stroke="#e0e0e2" stroke-width="1"/>
<rect x="54" y="249" width="14" height="14" rx="3"/><path d="M61 245v4M61 263v4M51 256h3M68 256h3"/>
<rect x="161" y="247" width="17" height="16" rx="2"/><path d="M166 251.500l4 3.500-4 3.500" stroke-width="1.500"/>
<path d="M263 248h9l7 7.500-7 7.500h-9a2 2 0 0 1-2-2v-11a2 2 0 0 1 2-2z"/>
<path d="M381 264V248M376 253l5-5 5 5M391 247v16M386 258l5 5 5-5" stroke="#0060df" stroke-width="2.400"/>
<path d="M484 247c-3 0-3 2-3 4v2c0 2-1 3-3 3 2 0 3 1 3 3v2c0 2 0 3 3 3M491 247c3 0 3 2 3 4v2c0 2 1 3 3 3-2 0-3 1-3 3v2c0 2 0 3-3 3" stroke-width="2.400"/>
<path d="M606 262a9.500 9.500 0 1 1 13 0M612 262l2-8" stroke-width="2.400"/>
<rect x="737" y="247" width="10" height="16" rx="3"/><path d="M733 250h4M732.500 255h4M733 260h4M747 250h4M747 255h4M747 260h4" stroke-width="1.500"/>
<rect x="837" y="246" width="16" height="18" rx="2"/><path d="M837 255h16M842 251h6M842 260h6"/>
<circle cx="944" cy="248" r="2.600" fill="#38383d" stroke="none"/><path d="M935 253.500h18" stroke-width="3"/><path d="M944 253v6" stroke-width="7"/><path d="M941.500 258v7M946.500 258v7" stroke-width="2.500"/>
<g stroke-width="1.500"><rect x="1065" y="247" width="4" height="4" rx="1"/><rect x="1071" y="247" width="4" height="4" rx="1"/><rect x="1077" y="247" width="4" height="4" rx="1"/><rect x="1065" y="253" width="4" height="4" rx="1"/><rect x="1071" y="253" width="4" height="4" rx="1"/><rect x="1077" y="253" width="4" height="4" rx="1"/><rect x="1065" y="259" width="4" height="4" rx="1"/><rect x="1071" y="259" width="4" height="4" rx="1"/><rect x="1077" y="259" width="4" height="4" rx="1"/></g>
<circle cx="1785" cy="256" r="7.500" fill="#d70022" stroke="none"/><path d="M1785 251v6M1785 259.500v2" stroke="#fff" stroke-width="2.500"/>
<path d="M1815.500 242v26" stroke="#e0e0e2" stroke-width="1"/>
<path d="M1836 250v-2a2 2 0 0 1 2-2h8a2 2 0 0 1 2 2v14a2 2 0 0 1-2 2h-8"/><rect x="1830" y="252" width="8" height="12" rx="1.500"/>
<circle cx="1863" cy="255" r="2.100" fill="#38383d" stroke="none"/><circle cx="1871" cy="255" r="2.100" fill="#38383d" stroke="none"/><circle cx="1879" cy="255" r="2.100" fill="#38383d" stroke="none"/>
<path d="M1898 249l13 13M1911 249l-13 13"/>
<!-- filter row -->
<rect x="15" y="288" width="11" height="13" rx="2"/><path d="M13 286.500h15M18 286v-2h5v2M18.500 291v7M20.500 291v7M22.500 291v7" stroke-width="1.500"/>
<polygon points="53,286 65,286 60.500,292 60.500,298 57.500,296 57.500,292" fill="#d4d4d4" stroke="#999" stroke-width="1.200"/>
<circle cx="986" cy="292" r="10" fill="#6f6f73" stroke="none"/><path d="M981.500 287.500l9 9M990.500 287.500l-9 9" stroke="#fff" stroke-width="2.400"/>
<path d="M1003.500 281v22M1147.500 281v22M1628.500 281v22M1754.500 281v22M1879.500 281v22" stroke="#e0e0e2" stroke-width="1"/>
<path d="M1019 285v13M1029 285v13" stroke-width="1.500"/>
<path d="M1051 293h14M1058 286v14"/>
<circle cx="1091" cy="290" r="5.500"/><path d="M1095 294l6 6" stroke-width="2.500"/>
<circle cx="1127" cy="293" r="6.500" stroke-width="2.500"/><path d="M1122.500 288.500l9 9" stroke-width="2.500"/>
<rect x="1638.500" y="284.500" width="16" height="16" rx="2" stroke="#7a7a7a" stroke-width="1.500"/>
<path d="M1860 288l-3 4h6zM1860 298l-3-4h6z" fill="#4a4a4f" stroke="none"/>
<circle cx="1899" cy="293" r="5" stroke-width="2"/><circle cx="1899" cy="293" r="8" stroke-width="3" stroke-dasharray="3 3.300"/>
<!-- turtles -->
<g fill="#9a9a9e" stroke="none"><path d="M686 404a6 6 0 0 1 12-1v1zM684 401.500a2 2 0 0 1 4 0v2h-4zM688 404h2v3h-2zM694 404h2v3h-2z" transform="translate(0,-2)"/><path d="M686 764a6 6 0 0 1 12-1v1zM684 761.500a2 2 0 0 1 4 0v2h-4zM688 764h2v3h-2zM694 764h2v3h-2z" transform="translate(0,-2)"/></g>
<!-- footer -->
<circle cx="21" cy="874" r="6.500" stroke-width="2.200"/><path d="M18 865h6M21 865v3M21 871v3.500" stroke-width="1.800"/>
<path d="M136.500 860v20M362.500 860v20" stroke="#e0e0e2" stroke-width="1"/>
<!-- side icons -->
<rect x="1200.500" y="319" width="17" height="14" stroke="#737373" stroke-width="1.500"/><path d="M1212 319v14" stroke="#737373" stroke-width="1.500"/><path d="M1204 323v6l4-3z" stroke="#38383d" stroke-width="1.300"/>
<rect x="1199.500" y="521" width="17" height="14" stroke="#737373" stroke-width="1.500"/><path d="M1211 521v14" stroke="#737373" stroke-width="1.500"/><path d="M1203 525v6l4-3z" stroke="#38383d" stroke-width="1.300"/>
<polygon points="1203,351 1215,351 1210.500,357 1210.500,363 1207.500,361 1207.500,357" fill="#e4e4e4" stroke="#999" stroke-width="1.200"/>
<polygon points="1202,553 1214,553 1209.500,559 1209.500,565 1206.500,563 1206.500,559" fill="#e4e4e4" stroke="#999" stroke-width="1.200"/>
<!-- arrow -->
<polygon points="1500,464 1528,464 1528,485 1540,485 1514,504 1488,485 1500,485" fill="#fff" stroke="#ed1c24" stroke-width="5"/>
</svg>

<!-- red annotation boxes -->
<div class="x" style="left:357px;top:232px;width:114px;height:44px"></div>
<div class="x" style="left:40px;top:274px;width:73px;height:34px"></div>
<div class="x" style="left:1151px;top:274px;width:42px;height:38px;border-width:4px 5px 8px 8px"></div>
<div class="x" style="left:0;top:530px;width:1174px;height:36px"></div>
<div class="x" style="left:1382px;top:303px;width:94px;height:39px"></div>
<div class="x" style="left:1833px;top:356px;width:84px;height:52px"></div>
<div class="x" style="left:1195px;top:398px;width:66px;height:37px"></div>
<div class="x" style="left:1245px;top:438px;width:84px;height:29px"></div>
<div class="x" style="left:1457px;top:502px;width:105px;height:45px"></div>
<div class="x" style="left:1828px;top:567px;width:92px;height:40px"></div>

<!-- context menu -->
<div id="menu"></div>
<div class="mi" style="top:633px"><u>U</u>ndo</div>
<div class="ms" style="top:666px"></div>
<div class="mi" style="top:681px">Cu<u>t</u></div>
<div class="mi mw" style="top:719px"><u>C</u>opy</div>
<div class="mi" style="top:756px"><u>P</u>aste</div>
<div class="mi" style="top:794px"><u>D</u>elete</div>
<div class="ms" style="top:827px"></div>
<div class="mi mw" style="top:842px">Select <u>A</u>ll</div>
<div class="x" style="left:1610px;top:714px;width:94px;height:31px"></div>

</body></html>
